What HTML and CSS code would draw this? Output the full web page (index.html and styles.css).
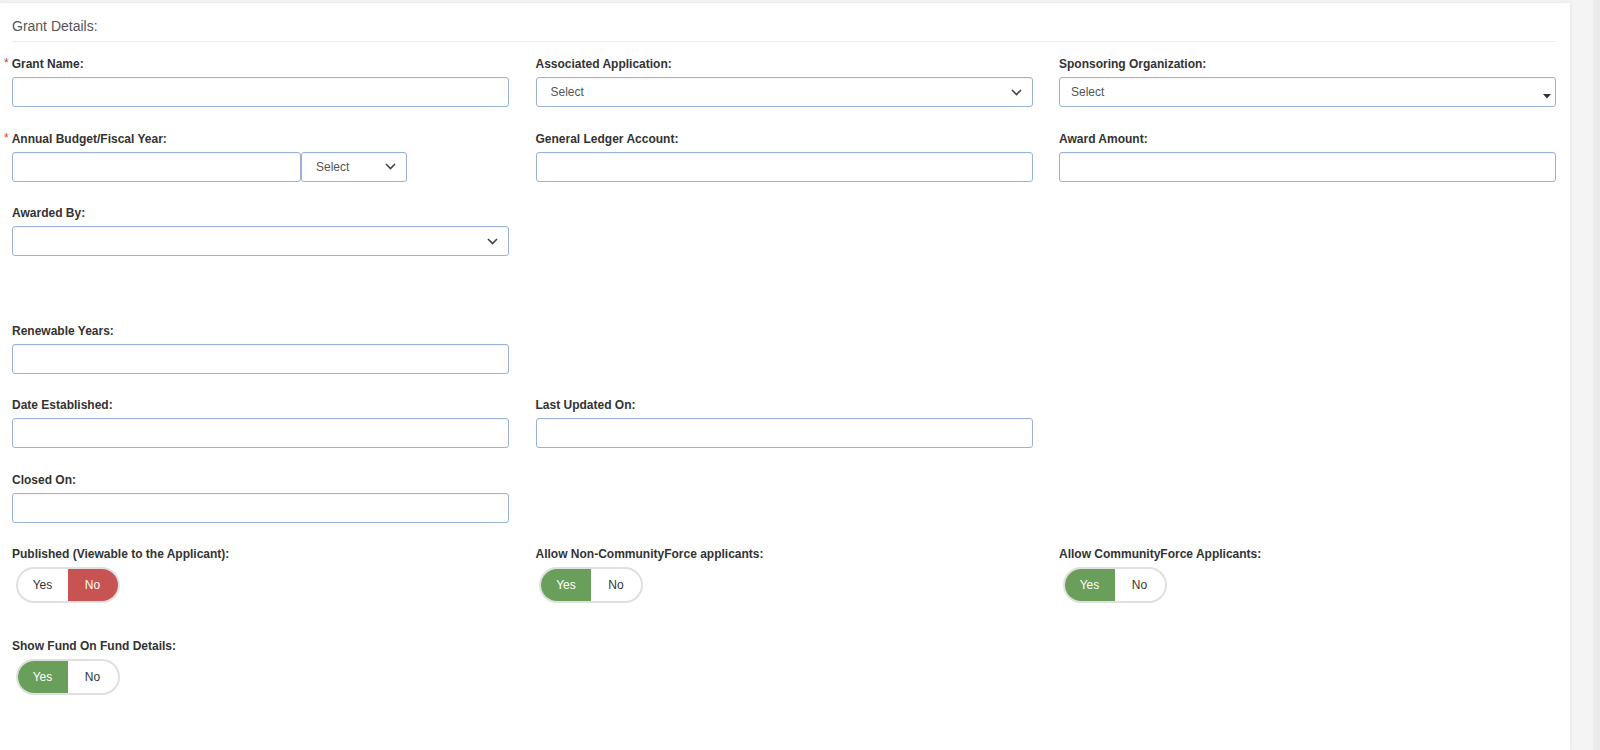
FILE: index.html
```html
<!doctype html>
<html lang="en">

<head>
    <meta charset="utf-8">
    <title>Grant Details</title>
    <meta name="viewport" content="width=device-width, initial-scale=1">
    <link rel="stylesheet" href="styles.css">
</head>

<body>
    <div class="page">
        <div class="panel">
            <div class="panel__title">Grant Details:</div>

            <div class="form-grid">
                <div class="field">
                    <label class="field__label"><span class="req">*</span>Grant Name:</label>
                    <div class="control"></div>
                </div>
                <div class="field">
                    <label class="field__label">Associated Application:</label>
                    <div class="control control--select">
                        <span class="control__text">Select</span>
                        <svg class="chevron" width="11" height="7" viewBox="0 0 11 7"><path d="M1 1l4.5 4.5L10 1" fill="none" stroke="#444" stroke-width="1.6"/></svg>
                    </div>
                </div>
                <div class="field">
                    <label class="field__label">Sponsoring Organization:</label>
                    <div class="control control--select control--s2">
                        <span class="control__text">Select</span>
                        <svg class="caret" width="8" height="5" viewBox="0 0 8 5"><path d="M0 0h8L4 4.5z" fill="#333"/></svg>
                    </div>
                </div>

                <div class="field">
                    <label class="field__label"><span class="req">*</span>Annual Budget/Fiscal Year:</label>
                    <div class="combo">
                        <div class="control combo__input"></div>
                        <div class="control control--select combo__select">
                            <span class="control__text">Select</span>
                            <svg class="chevron" width="11" height="7" viewBox="0 0 11 7"><path d="M1 1l4.5 4.5L10 1" fill="none" stroke="#444" stroke-width="1.6"/></svg>
                        </div>
                    </div>
                </div>
                <div class="field">
                    <label class="field__label">General Ledger Account:</label>
                    <div class="control"></div>
                </div>
                <div class="field">
                    <label class="field__label">Award Amount:</label>
                    <div class="control"></div>
                </div>

                <div class="field">
                    <label class="field__label">Awarded By:</label>
                    <div class="control control--select">
                        <span class="control__text"></span>
                        <svg class="chevron" width="11" height="7" viewBox="0 0 11 7"><path d="M1 1l4.5 4.5L10 1" fill="none" stroke="#444" stroke-width="1.6"/></svg>
                    </div>
                </div>
                <div class="spacer"></div>

                <div class="field field--first">
                    <label class="field__label">Renewable Years:</label>
                    <div class="control"></div>
                </div>

                <div class="field field--first">
                    <label class="field__label">Date Established:</label>
                    <div class="control"></div>
                </div>
                <div class="field">
                    <label class="field__label">Last Updated On:</label>
                    <div class="control"></div>
                </div>

                <div class="field field--first">
                    <label class="field__label">Closed On:</label>
                    <div class="control"></div>
                </div>

                <div class="field field--toggle field--first">
                    <label class="field__label">Published (Viewable to the Applicant):</label>
                    <div class="toggle">
                        <span class="toggle__opt">Yes</span>
                        <span class="toggle__opt toggle__opt--no">No</span>
                    </div>
                </div>
                <div class="field field--toggle">
                    <label class="field__label">Allow Non-CommunityForce applicants:</label>
                    <div class="toggle">
                        <span class="toggle__opt toggle__opt--yes">Yes</span>
                        <span class="toggle__opt">No</span>
                    </div>
                </div>
                <div class="field field--toggle">
                    <label class="field__label">Allow CommunityForce Applicants:</label>
                    <div class="toggle">
                        <span class="toggle__opt toggle__opt--yes">Yes</span>
                        <span class="toggle__opt">No</span>
                    </div>
                </div>

                <div class="field field--toggle field--first">
                    <label class="field__label">Show Fund On Fund Details:</label>
                    <div class="toggle">
                        <span class="toggle__opt toggle__opt--yes">Yes</span>
                        <span class="toggle__opt">No</span>
                    </div>
                </div>
            </div>
        </div>
        <div class="gutter"></div>
        <div class="track"></div>
    </div>
</body>

</html>
```

FILE: styles.css
```css
* {
    padding: 0;
    margin: 0;
    box-sizing: border-box;
}

html,
body {
    height: 100%;
}

body {
    background-color: #f4f4f4;
    font-family: Arial, "Liberation Sans", sans-serif;
    color: #333;
    overflow: hidden;
}

.page {
    display: flex;
    height: 100%;
}

.panel {
    width: 1570px;
    flex: none;
    margin-top: 3px;
    padding: 13px 14px 0 12px;
    background-color: #fff;
    box-shadow: 0 0 4px rgba(0, 0, 0, 0.08);
}

.gutter {
    flex: 1;
}

.track {
    width: 7px;
    background-color: #ebebeb;
}

.panel__title {
    font-size: 14px;
    line-height: 20px;
    color: #555;
    padding-bottom: 5px;
    border-bottom: 1px solid #eee;
    margin-right: -1px;
}

.form-grid {
    display: grid;
    grid-template-columns: repeat(3, 497px);
    column-gap: 26.5px;
    padding-top: 14px;
}

.field {
    margin-bottom: 23.5px;
}

.field--first {
    grid-column: 1;
}

.field--toggle {
    margin-bottom: 35px;
}

.spacer {
    grid-column: 1 / -1;
    height: 43px;
}

.field__label {
    display: block;
    font-size: 12px;
    font-weight: bold;
    line-height: 16px;
    margin-bottom: 5px;
    color: #333;
}

.req {
    color: #d43a3a;
    font-weight: normal;
    font-size: 12px;
    margin-left: -8px;
    margin-right: 3px;
    position: relative;
    top: -1px;
}

.control {
    height: 30px;
    border: 1px solid #98b3d4;
    border-radius: 3px;
    background-color: #fff;
    box-shadow: inset 0 1px 1px rgba(0, 0, 0, 0.04);
}

.control--select {
    display: flex;
    align-items: center;
    justify-content: space-between;
    padding: 0 10px 0 14px;
}

.control--s2 {
    padding: 0 4px 0 11px;
}

.control__text {
    font-size: 12px;
    color: #555;
}

.chevron {
    display: block;
}

.caret {
    display: block;
    margin-top: 9px;
}

.combo {
    display: flex;
}

.combo__input {
    width: 289px;
}

.combo__select {
    width: 106px;
}

.toggle {
    display: flex;
    width: 104px;
    height: 36px;
    margin-left: 3.5px;
    margin-top: 1px;
    border: 2px solid #e0e0e0;
    border-radius: 18px;
    overflow: hidden;
    background-color: #fff;
}

.toggle__opt {
    flex: 1;
    display: flex;
    align-items: center;
    justify-content: center;
    font-size: 12px;
    color: #333;
}

.toggle__opt--yes {
    background-color: #6a9f5b;
    color: #fff;
}

.toggle__opt--no {
    background-color: #c75452;
    color: #fff;
}
```
